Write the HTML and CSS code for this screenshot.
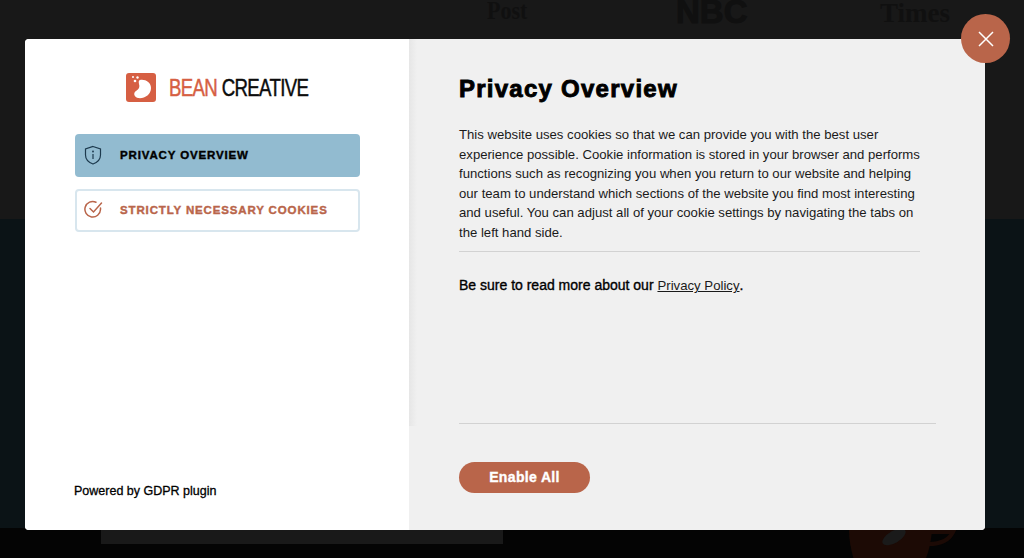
FILE: index.html
```html
<!DOCTYPE html>
<html lang="en">
<head>
<meta charset="utf-8">
<title>Privacy Overview</title>
<link rel="stylesheet" href="styles.css">
</head>
<body>
<div class="page">
  <section class="band-top">
    <div class="press">
      <span class="press-post">Post</span>
      <span class="press-nbc">NBC</span>
      <span class="press-times">Times</span>
    </div>
  </section>
  <section class="band-mid"></section>
  <section class="band-bottom">
    <div class="bottom-block"></div>
    <svg class="cup" width="110" height="30" viewBox="0 0 110 30"><path d="M0 0H83C82 12 80 22 76 30H5C2 20 0 10 0 0Z" fill="#1c0a05"/><path d="M80 2H104C100 10 92 14 80 14" fill="none" stroke="#1c0a05" stroke-width="4"/><ellipse cx="45" cy="7" rx="13" ry="6" transform="rotate(-30 45 7)" fill="#1a1a1a"/></svg>
  </section>
</div>

<div class="modal">
  <aside class="side">
    <div class="logo">
      <svg class="logo-mark" width="30" height="29" viewBox="0 0 30 29"><rect width="30" height="29" rx="3" fill="#d65f43"/><path d="M14 7C19 6 25 9 25 15C25 22 18 26 12 25C8 24 7 20 10 18C13 16 14 14 13 11C12.600 9 12.500 7.500 14 7Z" fill="#fff"/><circle cx="9" cy="8" r="1.300" fill="#fff"/><circle cx="11.500" cy="4.500" r="1.200" fill="#fff"/><circle cx="7" cy="4" r="1" fill="#fff"/></svg>
      <span class="logo-text"><span class="logo-bean">BEAN</span> CREATIVE</span>
    </div>
    <nav class="tabs">
      <a class="tab tab-active">
        <svg class="tab-icon" width="18" height="20" viewBox="0 0 18 20" fill="none" stroke="#1d3a4e" stroke-width="1.200"><path d="M9 1.500L16.500 4V10C16.500 14.500 13 17.500 9 19C5 17.500 1.500 14.500 1.500 10V4Z"/><path d="M9 9V14" /><circle cx="9" cy="6.500" r=".4"/></svg>
        <span>PRIVACY OVERVIEW</span>
      </a>
      <a class="tab tab-idle">
        <svg class="tab-icon" width="19" height="19" viewBox="0 0 19 19" fill="none" stroke="#b9654a" stroke-width="1.500" stroke-linecap="round"><path d="M16.500 8V9.500A7.800 7.800 0 1 1 12 2.200"/><path d="M6 8.500L9.500 12L17.500 3"/></svg>
        <span>STRICTLY NECESSARY COOKIES</span>
      </a>
    </nav>
    <p class="powered">Powered by GDPR plugin</p>
  </aside>
  <main class="content">
    <div class="scroller"></div>
    <h1 class="title">Privacy Overview</h1>
    <p class="copy">This website uses cookies so that we can provide you with the best user experience possible. Cookie information is stored in your browser and performs functions such as recognizing you when you return to our website and helping our team to understand which sections of the website you find most interesting and useful. You can adjust all of your cookie settings by navigating the tabs on the left hand side.</p>
    <hr class="rule-short">
    <p class="more"><strong>Be sure to read more about our <a class="link">Privacy Policy</a>.</strong></p>
    <div class="foot">
      <button class="enable">Enable All</button>
    </div>
  </main>
</div>

<button class="close" aria-label="Close">
  <svg width="16" height="16" viewBox="0 0 16 16" stroke="#fff" stroke-width="1.500"><path d="M1 1L15 15M15 1L1 15"/></svg>
</button>
</body>
</html>
```
FILE: styles.css
```css
* { box-sizing: border-box; }
html, body { margin: 0; height: 558px; overflow: hidden; background: #000; font-family: "Liberation Sans", Arial, sans-serif; }
.page { display: flex; flex-direction: column; height: 558px; }
.band-top { height: 219px; background: #181818; overflow: hidden; }
.press { position: relative; height: 39px; color: #101010; }
.press span { position: absolute; white-space: nowrap; }
.press-post { left: 487px; top: 0; font: 700 22px/22px "Liberation Serif", serif; transform: scaleY(1.150); }
.press-nbc { left: 676px; top: 0; font: 700 33px/24px "Liberation Sans", sans-serif; -webkit-text-stroke: 1px currentColor; }
.press-times { left: 880px; top: 2px; font: 700 27px/22px "Liberation Serif", serif; }
.band-mid { height: 309px; background: #0b1316; }
.band-bottom { position: relative; flex: 1; background: #040404; }
.bottom-block { margin-left: 101px; width: 402px; height: 16px; background: #191919; }
.cup { position: absolute; left: 849px; top: 2px; }

.modal { position: absolute; left: 25px; top: 39px; width: 960px; height: 491px; display: flex; border-radius: 4px; overflow: hidden; background: #fff; }
.side { width: 384px; flex: none; padding: 33px 49px 0 50px; display: flex; flex-direction: column; background: #fff; }
.logo { display: flex; align-items: center; gap: 13px; height: 30px; margin-left: 51px; }
.logo-mark { flex: none; }
.logo-text { padding-top: 1px; font: 400 23px/30px "Liberation Sans", sans-serif; color: #0c0c0c; letter-spacing: -.8px; transform: scaleX(.81); transform-origin: left center; white-space: nowrap; width: 141px; -webkit-text-stroke: .45px currentColor; }
.logo-bean { color: #d65f43; }
.tabs { display: flex; flex-direction: column; gap: 12px; margin-top: 32px; }
.tab { display: flex; align-items: center; height: 43px; border-radius: 4px; padding: 0 0 2px 9px; font-size: 11.500px; font-weight: 700; letter-spacing: .86px; -webkit-text-stroke: .4px currentColor; white-space: nowrap; }
.tab-icon { flex: none; margin-right: 18px; }
.tab-active { background: #92bbd0; color: #000; }
.tab-idle { background: #fff; border: 2px solid #d8e6ee; color: #b9654a; padding-left: 7px; }
.tab-idle .tab-icon { margin-right: 17px; }
.powered { margin: auto 0 31px -1px; font-size: 12.500px; line-height: 16px; font-weight: 400; color: #000; -webkit-text-stroke: .3px #000; }

.content { position: relative; flex: 1; display: flex; flex-direction: column; padding: 34px 49px 37px 50px; background: #f0f0f0; }
.scroller { position: absolute; left: 0; top: 0; width: 8px; height: 387px; background: linear-gradient(to right, #e6e6e6, #f0f0f0); }
.title { margin: 0; font-size: 24px; line-height: 32px; font-weight: 700; color: #000; letter-spacing: 1.250px; -webkit-text-stroke: .9px #000; }
.copy { margin: 20px 0 0; width: 462px; font-size: 13.150px; line-height: 19.550px; color: #1a1a1a; }
.rule-short { width: 461px; margin: 9px 0 0; border: 0; border-top: 1px solid #d2d2d2; }
.more { margin: 23px 0 0; font-size: 14px; line-height: 20px; color: #000; }
.more strong { font-weight: 400; -webkit-text-stroke: .35px #000; }
.link { font-size: 13.200px; font-weight: 400; color: #1a1a1a; text-decoration: underline; -webkit-text-stroke: 0; }
.foot { margin-top: auto; border-top: 1px solid #d2d2d2; padding-top: 38px; }
.enable { display: block; width: 131px; height: 31px; padding: 0; border: 0; border-radius: 16px; background: #b9654a; color: #fff; font: 700 14px/31px "Liberation Sans", sans-serif; letter-spacing: .35px; -webkit-text-stroke: .35px #fff; }

.close { position: absolute; left: 961px; top: 14px; width: 49px; height: 49px; padding: 0; border: 0; border-radius: 50%; background: #b9654a; display: flex; align-items: center; justify-content: center; }
```
